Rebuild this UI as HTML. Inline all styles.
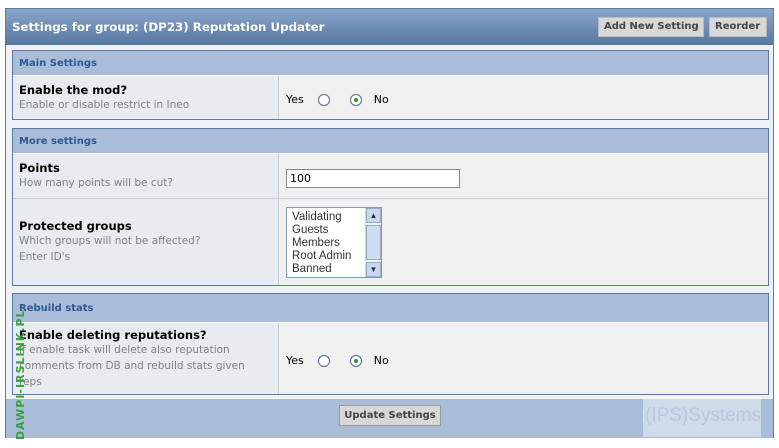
<!DOCTYPE html>
<html><head><style>
*{margin:0;padding:0;box-sizing:border-box}
body{width:779px;height:448px;background:#fff;font-family:"DejaVu Sans","Liberation Sans",sans-serif;position:relative;overflow:hidden}
.outer{position:absolute;left:5px;top:8px;width:769px;height:430px;border:1px solid #5b7aa5;background:#eef1f6}
.hdr{height:36px;background:linear-gradient(#8aa6cc,#56779f);color:#fff;font-weight:bold;font-size:11.8px;padding:11px 6px;position:relative;white-space:nowrap}
.btn{position:absolute;top:8px;height:20px;background:#d8d8d8;border:1px solid #bbb;color:#444;font-size:10px;font-weight:bold;padding:3px 5px;white-space:nowrap}
.sec{position:absolute;left:6px;width:757px;border:1px solid #5b7aa5}
.sh{background:#aabdd8;color:#2d5a93;font-weight:bold;font-size:10px;padding:0 6px;border-bottom:1px solid #fff}
.row{display:flex;border-top:1px solid #ccd}
.l{width:266px;background:#e8ecf0;border-right:1px solid #c9cdd3;padding:0 6px;display:flex;flex-direction:column;justify-content:center}
.r{flex:1;background:#f0f0f0;padding:0 7px;display:flex;align-items:center;font-size:11px;padding-top:4px}
.t{font-weight:bold;font-size:11.5px;color:#000}
.d{color:#808080;font-size:10.5px;line-height:16px;width:240px}
.rad{display:inline-block;width:12px;height:12px;border:1px solid #4a6a90;border-radius:50%;background:#fff;margin:0 12px 0 14px;position:relative;vertical-align:middle}
.rad.on::after{content:"";position:absolute;left:3px;top:3px;width:4px;height:4px;border-radius:50%;background:#2a9a2a}
</style></head><body>
<div class="outer">
<div class="hdr">Settings for group: (DP23) Reputation Updater
<div class="btn" style="left:592px;width:106px">Add New Setting</div>
<div class="btn" style="left:703px;width:58px">Reorder</div></div>
<div class="sec" style="top:41px;height:70px">
<div class="sh" style="height:25px;line-height:25px">Main Settings</div>
<div class="row" style="height:43px;border-top:none"><div class="l"><div class="t">Enable the mod?</div><div class="d">Enable or disable restrict in Ineo</div></div>
<div class="r">Yes<span class="rad"></span><span class="rad on" style="margin-left:8px"></span>No</div></div>
</div>
<div class="sec" style="top:119px;height:158px">
<div class="sh" style="height:25px;line-height:25px">More settings</div>
<div class="row" style="height:44px;border-top:none"><div class="l"><div class="t">Points</div><div class="d">How many points will be cut?</div></div>
<div class="r"><div style="width:174px;height:19px;border:1px solid #888;background:#fff;font-size:11px;padding:2px 3px">100</div></div></div>
<div class="row" style="height:87px"><div class="l"><div class="t">Protected groups</div><div class="d">Which groups will not be affected?<br>Enter ID's</div></div>
<div class="r" style="padding-top:0"><div style="width:96px;height:71px;border:1px solid #7f9db9;background:#fff;position:relative;font-family:'Liberation Sans',sans-serif;font-size:11.5px;line-height:13px;padding:3px 5px;color:#333">Validating<br>Guests<br>Members<br>Root Admin<br>Banned
<div style="position:absolute;right:0;top:0;width:16px;height:69px;background:#eef2fb;border-left:1px solid #cdd"><div style="height:15px;background:#c8d6f2;border:1px solid #9ab;font-size:8px;text-align:center">▲</div><div style="height:35px;margin-top:2px;background:#cfdcf5;border:1px solid #9ab"></div><div style="position:absolute;bottom:0;width:15px;height:15px;background:#c8d6f2;border:1px solid #9ab;font-size:8px;text-align:center">▼</div></div></div></div></div>
</div>
<div class="sec" style="top:284px;height:102px">
<div class="sh" style="height:29px;line-height:29px">Rebuild stats</div>
<div class="row" style="height:71px;border-top:none"><div class="l"><div class="t">Enable deleting reputations?</div><div class="d" style="width:232px">If enable task will delete also reputation comments from DB and rebuild stats given reps</div></div>
<div class="r">Yes<span class="rad"></span><span class="rad on" style="margin-left:8px"></span>No</div></div>
</div>
<div style="position:absolute;left:0;top:390px;width:767px;height:39px;background:#aabdd8"></div>
<div style="position:absolute;left:333px;top:396px;width:102px;height:21px;background:#d8d8d8;border:1px solid #999;font-size:10px;font-weight:bold;color:#444;text-align:center;line-height:19px;white-space:nowrap">Update Settings</div>
<div style="position:absolute;left:637px;top:388px;width:118px;height:40px;background:rgba(255,255,255,.45);color:#b8c8de;font-size:19px;padding:8px 2px;font-family:'Liberation Sans',sans-serif;white-space:nowrap">(IPS)Systems</div>
</div>
<div style="position:absolute;left:14px;top:275px;width:14px;height:165px;color:#3aa040;font-weight:bold;font-size:11px;writing-mode:vertical-rl;transform:rotate(180deg);letter-spacing:1px;white-space:nowrap">DAWPI-IRSLINK.PL</div>
</body></html>
